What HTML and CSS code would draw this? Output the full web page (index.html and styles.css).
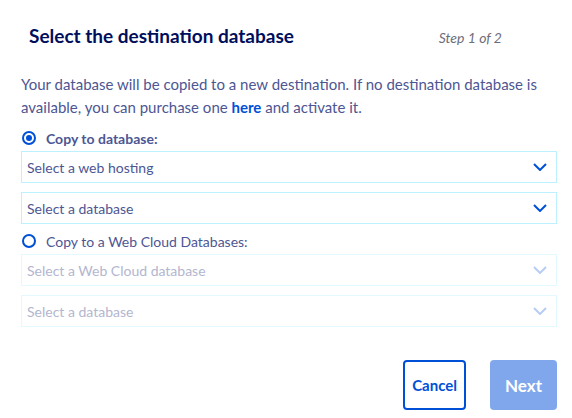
FILE: index.html
```html
<!DOCTYPE html>
<html lang="en">
<head>
    <meta charset="UTF-8">
    <title>Copy database</title>
    <link rel="stylesheet" href="styles.css">
</head>
<body>
    <div class="modal">
        <div class="modal-header">
            <h2>Select the destination database</h2>
            <span class="step">Step 1 of 2</span>
        </div>

        <p class="intro">Your database will be copied to a new destination. If no destination database is available, you can purchase one <a href="#">here</a> and activate it.</p>

        <div class="option">
            <label class="radio-label checked">
                <span class="radio"></span>
                Copy to database:
            </label>
            <div class="select"><span>Select a web hosting</span><svg viewBox="0 0 14 8"><path d="M1 1l6 6 6-6"/></svg></div>
            <div class="select"><span>Select a database</span><svg viewBox="0 0 14 8"><path d="M1 1l6 6 6-6"/></svg></div>
        </div>

        <div class="option">
            <label class="radio-label">
                <span class="radio"></span>
                Copy to a Web Cloud Databases:
            </label>
            <div class="select disabled"><span>Select a Web Cloud database</span><svg viewBox="0 0 14 8"><path d="M1 1l6 6 6-6"/></svg></div>
            <div class="select disabled"><span>Select a database</span><svg viewBox="0 0 14 8"><path d="M1 1l6 6 6-6"/></svg></div>
        </div>

        <div class="actions">
            <button class="btn btn-secondary">Cancel</button>
            <button class="btn btn-primary" disabled>Next</button>
        </div>
    </div>
</body>
</html>
```

FILE: styles.css
```css
* {
    margin: 0;
    padding: 0;
    box-sizing: border-box;
    font-family: Lato, "Open Sans", sans-serif;
}

body {
    background-color: #fff;
    color: #4d5693;
}

.modal {
    padding: 24px 15px 0 21px;
}

.modal-header {
    display: flex;
    justify-content: space-between;
    align-items: baseline;
    padding: 0 55px 0 8px;
}

.modal-header h2 {
    font-size: 19px;
    font-weight: bold;
    color: #000e5c;
}

.step {
    font-size: 14px;
    font-style: italic;
    color: #6d6d7a;
}

.intro {
    margin: 26px 0 11px;
    font-size: 15px;
    line-height: 23px;
}

.intro a {
    color: #0050d7;
    font-weight: bold;
    text-decoration: none;
}

.option {
    display: flex;
    flex-direction: column;
    gap: 9px;
    margin-top: 9px;
}

.radio-label {
    display: flex;
    align-items: center;
    gap: 10px;
    font-size: 14px;
    height: 16px;
    margin-left: 1px;
    margin-bottom: -4px;
}

.radio-label.checked {
    font-weight: bold;
}

.radio {
    width: 14px;
    height: 14px;
    border: 2px solid #0050d7;
    border-radius: 50%;
    position: relative;
}

.checked .radio::after {
    content: "";
    position: absolute;
    top: 2px;
    left: 2px;
    width: 6px;
    height: 6px;
    border-radius: 50%;
    background-color: #0050d7;
}

.select {
    display: flex;
    justify-content: space-between;
    align-items: center;
    height: 32px;
    padding: 0 9px 0 5px;
    border: 1px solid #bef1ff;
    font-size: 14px;
}

.select svg {
    width: 14px;
    height: 8px;
    fill: none;
    stroke: #0050d7;
    stroke-width: 2;
}

.select.disabled {
    color: #b3b6cf;
    border-color: #e3f8ff;
}

.select.disabled svg {
    stroke: #b8cdf3;
}

.actions {
    display: flex;
    justify-content: flex-end;
    gap: 24px;
    margin-top: 33px;
}

.btn {
    height: 50px;
    padding: 0 7px;
    border-radius: 4px;
    font-size: 15px;
    font-weight: bold;
    cursor: pointer;
}

.btn-secondary {
    border: 2px solid #0050d7;
    background-color: #fff;
    color: #0050d7;
}

.btn-primary {
    width: 67px;
    border: none;
    background-color: #80a7ec;
    color: #fff;
    font-size: 17px;
}
```
